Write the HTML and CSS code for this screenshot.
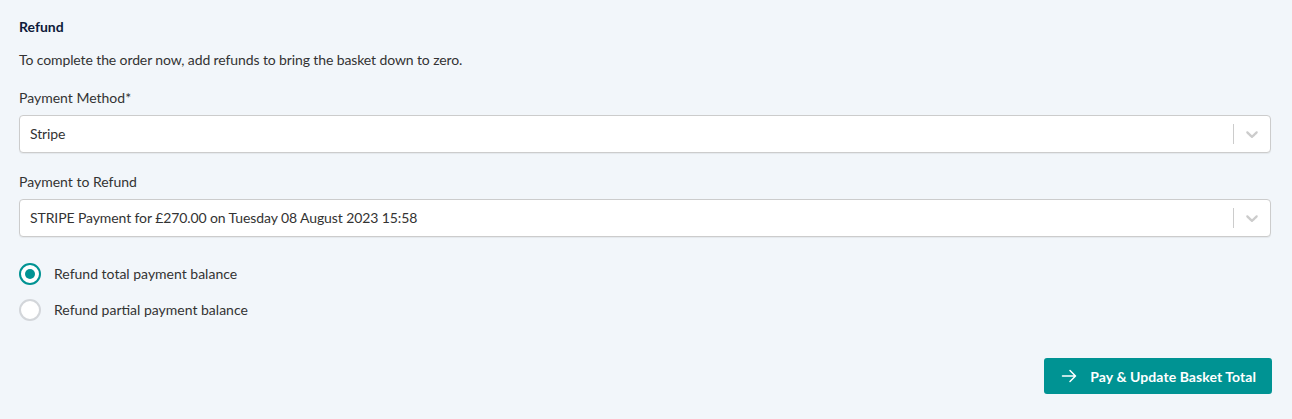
FILE: index.html
```html
<!DOCTYPE html>
<html lang="en">
<head>
  <meta charset="UTF-8">
  <meta name="viewport" content="width=device-width, initial-scale=1.0">
  <title>Refund</title>
  <link rel="stylesheet" href="styles.css">
</head>
<body>
  <div class="refund">
    <h2 class="title">Refund</h2>
    <p class="intro">To complete the order now, add refunds to bring the basket down to zero.</p>

    <!-- Payment method -->
    <label class="label">Payment Method*</label>
    <div class="select">
      <div class="select-value">Stripe</div>
      <span class="select-sep"></span>
      <div class="select-arrow">
        <svg width="20" height="20" viewBox="0 0 20 20"><path d="M4.516 7.548c0.436-0.446 1.043-0.481 1.576 0l3.908 3.747 3.908-3.747c0.533-0.481 1.141-0.446 1.574 0 0.436 0.445 0.408 1.197 0 1.615-0.406 0.418-4.695 4.502-4.695 4.502-0.217 0.223-0.502 0.335-0.787 0.335s-0.57-0.112-0.789-0.335c0 0-4.287-4.084-4.695-4.502s-0.436-1.17 0-1.615z"/></svg>
      </div>
    </div>

    <!-- Payment to refund -->
    <label class="label">Payment to Refund</label>
    <div class="select">
      <div class="select-value">STRIPE Payment for £270.00 on Tuesday 08 August 2023 15:58</div>
      <span class="select-sep"></span>
      <div class="select-arrow">
        <svg width="20" height="20" viewBox="0 0 20 20"><path d="M4.516 7.548c0.436-0.446 1.043-0.481 1.576 0l3.908 3.747 3.908-3.747c0.533-0.481 1.141-0.446 1.574 0 0.436 0.445 0.408 1.197 0 1.615-0.406 0.418-4.695 4.502-4.695 4.502-0.217 0.223-0.502 0.335-0.787 0.335s-0.57-0.112-0.789-0.335c0 0-4.287-4.084-4.695-4.502s-0.436-1.17 0-1.615z"/></svg>
      </div>
    </div>

    <div class="options">
      <div class="radio">
        <span class="radio-dot checked"></span>
        <span>Refund total payment balance</span>
      </div>
      <div class="radio">
        <span class="radio-dot"></span>
        <span>Refund partial payment balance</span>
      </div>
    </div>

    <div class="actions">
      <button class="button">
        <svg width="16" height="16" viewBox="0 0 16 16" fill="none" stroke="#fff" stroke-width="1.5" stroke-linecap="round" stroke-linejoin="round"><path d="M1.5 8h13M9 2.5l5.5 5.5L9 13.5"/></svg>
        Pay &amp; Update Basket Total
      </button>
    </div>
  </div>
</body>
</html>
```

FILE: styles.css
```css
body {
  font-family: Lato, "Open Sans", sans-serif;
  margin: 0;
  background: #f2f6fa;
  color: #333;
  font-size: 14px;
  line-height: 20px;
}

.refund {
  padding: 17px 21px 0 19px;
  display: flex;
  flex-direction: column;
}

.title {
  margin: 0;
  font-size: 14px;
  font-weight: 700;
  color: #0e1a3a;
}

.intro {
  margin: 13px 0 0;
  letter-spacing: -0.11px;
}

.label {
  display: block;
  margin-top: 18px;
}

.select + .label {
  margin-top: 19px;
}

.select {
  margin-top: 7px;
  height: 38px;
  box-sizing: border-box;
  background: #fff;
  border: 1px solid #cccccc;
  border-radius: 4px;
  box-shadow: 0 1px 1px rgba(0, 0, 0, 0.06);
  display: flex;
  align-items: center;
}

.select-value {
  flex: 1;
  padding-left: 10px;
  color: #333;
  letter-spacing: -0.1px;
}

.select-sep {
  width: 1px;
  height: 20px;
  background: #cccccc;
}

.select-arrow {
  padding: 8px;
  display: flex;
  fill: #cccccc;
}

.options {
  margin-top: 25px;
  display: flex;
  flex-direction: column;
  gap: 12px;
}

.radio {
  display: flex;
  align-items: center;
  gap: 13px;
  height: 24px;
}

.radio-dot {
  width: 22px;
  height: 22px;
  box-sizing: border-box;
  border: 2px solid #d3d6da;
  border-radius: 50%;
  background: #fff;
  display: flex;
  align-items: center;
  justify-content: center;
}

.radio-dot.checked {
  border-color: #009393;
}

.radio-dot.checked::after {
  content: "";
  width: 10px;
  height: 10px;
  border-radius: 50%;
  background: #009393;
}

.actions {
  margin-top: 36px;
  display: flex;
  justify-content: flex-end;
  margin-right: -1px;
}

.button {
  height: 36px;
  padding: 0 16px 0 17px;
  display: flex;
  align-items: center;
  gap: 13px;
  background: #009393;
  color: #fff;
  border: none;
  border-radius: 3px;
  font-family: inherit;
  font-size: 14px;
  font-weight: 700;
  letter-spacing: 0.07px;
  cursor: pointer;
}
```
